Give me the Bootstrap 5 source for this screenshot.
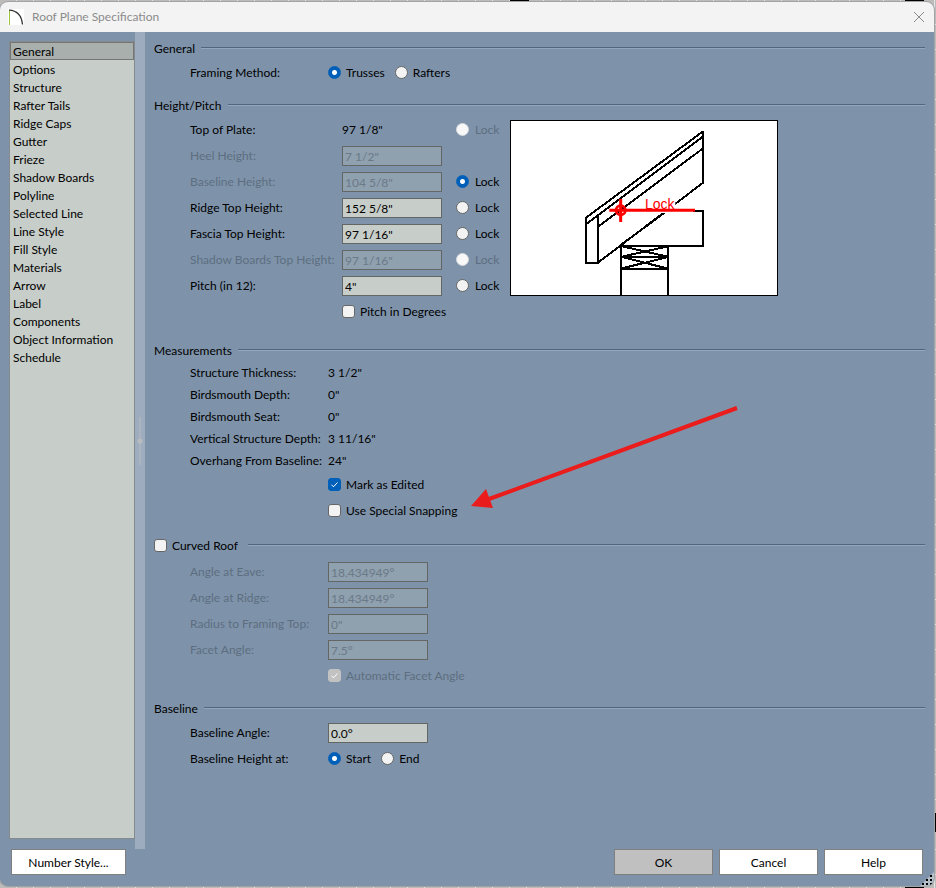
<!DOCTYPE html>
<html lang="en">
<head>
<meta charset="utf-8">
<meta name="viewport" content="width=device-width, initial-scale=1">
<title>Roof Plane Specification</title>
<link href="https://cdn.jsdelivr.net/npm/bootstrap@5.3.0/dist/css/bootstrap.min.css" rel="stylesheet">
<style>
  body {
    font-family: Lato, "Open Sans", sans-serif;
    font-size: 12px; line-height: 18px; color: #000;
    padding: 2px 2px 2px 0;
    background:
      linear-gradient(#000, #000) 510px 0 / 19px 2px no-repeat,
      linear-gradient(#000, #000) 905px 0 / 19px 2px no-repeat,
      linear-gradient(#000, #000) 905px 100% / 19px 2px no-repeat,
      linear-gradient(#000, #000) 100% 813px / 2px 19px no-repeat,
      repeating-linear-gradient(90deg, transparent 0 16px, #e4e4e4 16px 17px),
      repeating-linear-gradient(transparent 0 24px, #e4e4e4 24px 25px),
      #bdbbb9;
  }
  .dialog-window { background: #7e93aa; border-radius: 8px; overflow: hidden; box-shadow: 0 0 0 1px #a3a3a3; }
  .title-bar { height: 30px; background: #f3f3f3; color: #8b8b8b; padding: 0 9px 0 8px; }
  .title-bar .close-x { width: 12px; height: 12px; }
  .side-area { padding: 9px 0 10px 9px; }
  .side-list { width: 126px; background: #c7cdc8; border: 1px solid #858a8d; }
  .side-list a { color: #000; text-decoration: none; padding: 0 3px; height: 18px; line-height: 20px; }
  .side-list a.active { background: #a9afac; border: 1px solid #737674; padding: 0 2px; line-height: 18px; }
  .splitter { width: 10px; background: #9dadbf; }
  .panel { padding: 6px 9px 0 9px; }
  .group { margin-bottom: 9px; }
  .group-mid { margin-bottom: 11px; }
  .group-wide { margin-bottom: 15px; }
  .group-head { height: 22px; gap: 6px; line-height: 20px; }
  .group-head-check { gap: 10px; margin-bottom: 2px; }
  .rule { height: 2px; margin-bottom: 3px; background: linear-gradient(#53667d 50%, #93a7bd 50%); }
  .rows { padding-left: 36px; line-height: 20px; }
  .line { height: 26px; }
  .line-tight { height: 22px; }
  .label-a { width: 138px; white-space: nowrap; }
  .label-b { width: 152px; white-space: nowrap; }
  .value { width: 100px; }
  .indent-a { padding-left: 138px; }
  .indent-b { padding-left: 152px; }
  .off { color: #5d6e80; }
  .field {
    width: 100px; height: 20px; padding: 1px 2px 0; color: #000;
    background: #c7cdc8; border: 1px solid #646664; border-radius: 0;
  }
  .field:disabled { background: #8fa0af; color: #6b7a87; opacity: 1; }
  .tick, .dot {
    appearance: none; width: 13px; height: 13px; margin: 0 0 2px; flex: none;
    background: #f3f3f3; border: 1px solid #666; border-radius: 3px;
  }
  .dot { border-radius: 50%; }
  .dot:disabled { border-color: #d5d9dd; background: #f8f8f8; }
  .dot:checked { border-color: #005fb8; background: radial-gradient(circle, #fff 2px, #005fb8 3px); }
  .tick:checked { border-color: #005fb8; background: #005fb8; }
  .tick:checked:disabled { border-color: #c2c2c2; background: #c2c2c2; }
  .tick-box { width: 13px; height: 18px; }
  .tick-box .tick { margin: 2px 0 0; }
  .tick-box svg { left: 0; top: 2px; pointer-events: none; }
  .opt { gap: 5px; }
  .opt-b { gap: 6px; }
  .opts { gap: 10px; }
  .lock { margin-left: 14px; width: 54px; }
  .diagram { margin-top: 3px; border: 1px solid #000; background: #fff; line-height: 0; }
  .arrow { left: 317px; top: 66px; pointer-events: none; }
  .foot { padding: 0 11px 11px; gap: 6px; }
  .push {
    width: 99px; height: 26px; padding: 1px 0 0; font-size: 12px; line-height: 23px;
    background: #fff; color: #000; border: 1px solid #7f7f7f; border-radius: 0;
  }
  .push-wide { width: 115px; }
  .push-default { background: #c0c0c0; }
  .grip { right: 0; bottom: 0; }
</style>
<script src="https://cdn.jsdelivr.net/npm/bootstrap@5.3.0/dist/js/bootstrap.bundle.min.js"></script>
</head>
<body class="d-flex flex-column min-vh-100">
<div class="dialog-window d-flex flex-column flex-grow-1 position-relative">
  <header class="title-bar d-flex align-items-center">
    <svg width="16" height="16" viewBox="0 0 16 16" aria-hidden="true"><path fill="#fff" d="M0 0h16v16H0z"/><path d="M1.500 1v15" stroke="#9bc53d" fill="none"/><path d="M1 1.200C8 1.500 13.500 6 14.500 15.500" stroke="#333" stroke-width="1.300" fill="none"/></svg>
    <span class="ms-1 ps-1">Roof Plane Specification</span>
    <button type="button" class="btn p-0 border-0 ms-auto d-flex" aria-label="Close">
      <svg class="close-x" viewBox="0 0 12 12" aria-hidden="true"><path d="M1 1l10 10M11 1L1 11" stroke="#8b8b8b" fill="none"/></svg>
    </button>
  </header>

  <div class="d-flex flex-grow-1">
    <div class="side-area d-flex">
      <nav class="side-list d-flex flex-column" aria-label="Panels">
        <a href="#" class="active">General</a><a href="#">Options</a><a href="#">Structure</a><a href="#">Rafter Tails</a><a href="#">Ridge Caps</a><a href="#">Gutter</a><a href="#">Frieze</a><a href="#">Shadow Boards</a><a href="#">Polyline</a><a href="#">Selected Line</a><a href="#">Line Style</a><a href="#">Fill Style</a><a href="#">Materials</a><a href="#">Arrow</a><a href="#">Label</a><a href="#">Components</a><a href="#">Object Information</a><a href="#">Schedule</a>
      </nav>
    </div>
    <div class="splitter d-flex align-items-center justify-content-center">
      <svg width="6" height="48" viewBox="0 0 6 48" aria-hidden="true"><path d="M3 0v48" stroke="#b9bcbe"/><circle cx="3" cy="24" r="2.500" fill="#b9bcbe"/></svg>
    </div>

    <main class="panel flex-grow-1">
      <section class="group">
        <div class="group-head d-flex align-items-center"><span>General</span><div class="rule flex-grow-1"></div></div>
        <div class="rows">
          <div class="line d-flex align-items-center">
            <span class="label-a">Framing Method:</span>
            <div class="opts d-flex">
              <label class="opt d-flex align-items-center"><input type="radio" name="framing" class="dot" checked>Trusses</label>
              <label class="opt d-flex align-items-center"><input type="radio" name="framing" class="dot">Rafters</label>
            </div>
          </div>
        </div>
      </section>

      <section class="group-wide">
        <div class="group-head d-flex align-items-center"><span>Height/Pitch</span><div class="rule flex-grow-1"></div></div>
        <div class="d-flex align-items-start">
          <div class="rows">
            <div class="line d-flex align-items-center"><span class="label-b">Top of Plate:</span><span class="value">97 1/8"</span><label class="lock opt-b off d-flex align-items-center"><input type="radio" name="lock" class="dot" disabled>Lock</label></div>
            <div class="line d-flex align-items-center"><label class="label-b off" for="heel">Heel Height:</label><input id="heel" class="field" value='7 1/2"' disabled></div>
            <div class="line d-flex align-items-center"><label class="label-b off" for="base">Baseline Height:</label><input id="base" class="field" value='104 5/8"' disabled><label class="lock opt-b d-flex align-items-center"><input type="radio" name="lock" class="dot" checked>Lock</label></div>
            <div class="line d-flex align-items-center"><label class="label-b" for="ridge">Ridge Top Height:</label><input id="ridge" class="field" value='152 5/8"'><label class="lock opt-b d-flex align-items-center"><input type="radio" name="lock" class="dot">Lock</label></div>
            <div class="line d-flex align-items-center"><label class="label-b" for="fascia">Fascia Top Height:</label><input id="fascia" class="field" value='97 1/16"'><label class="lock opt-b d-flex align-items-center"><input type="radio" name="lock" class="dot">Lock</label></div>
            <div class="line d-flex align-items-center"><label class="label-b off" for="shadowb">Shadow Boards Top Height:</label><input id="shadowb" class="field" value='97 1/16"' disabled><label class="lock opt-b off d-flex align-items-center"><input type="radio" name="lock" class="dot" disabled>Lock</label></div>
            <div class="line d-flex align-items-center"><label class="label-b" for="pitch">Pitch (in 12):</label><input id="pitch" class="field" value='4"'><label class="lock opt-b d-flex align-items-center"><input type="radio" name="lock" class="dot">Lock</label></div>
            <div class="line indent-b d-flex align-items-center"><label class="opt d-flex align-items-center"><input type="checkbox" class="tick">Pitch in Degrees</label></div>
          </div>
          <div class="diagram">
            <svg width="266" height="174" viewBox="33 33 798 522" role="img" aria-label="Roof section with locked baseline">
              <g fill="none" stroke="#000" stroke-width="6" shape-rendering="crispEdges">
                <path d="M258 323L608 65M260 341L608 80M296 349L608 116M294 458L608 219M609 63V221"/>
                <path d="M258 321V459H294V318"/>
                <path d="M362 405L494 308"/>
                <path d="M580 302H609V408H362M363 408V558M504 408V558"/>
                <path d="M363 440H504M363 477H504M366 409L504 440M366 440L504 409M366 441L504 476M366 475L504 441"/>
              </g>
              <path fill="#fff" d="M440 266H526V309H440z"/>
              <g fill="none" stroke="#f00" stroke-width="9">
                <path d="M328 301H585M362 267V336"/><circle cx="362" cy="301" r="14" stroke-width="8"/>
              </g>
              <text x="435" y="297" fill="#f00" font-family="Liberation Sans, sans-serif" font-size="42">Lock</text>
            </svg>
          </div>
        </div>
      </section>

      <section class="group-mid position-relative">
        <div class="group-head d-flex align-items-center"><span>Measurements</span><div class="rule flex-grow-1"></div></div>
        <div class="rows">
          <div class="line-tight d-flex align-items-center"><span class="label-a">Structure Thickness:</span><span>3 1/2"</span></div>
          <div class="line-tight d-flex align-items-center"><span class="label-a">Birdsmouth Depth:</span><span>0"</span></div>
          <div class="line-tight d-flex align-items-center"><span class="label-a">Birdsmouth Seat:</span><span>0"</span></div>
          <div class="line-tight d-flex align-items-center"><span class="label-a">Vertical Structure Depth:</span><span>3 11/16"</span></div>
          <div class="line-tight d-flex align-items-center"><span class="label-a">Overhang From Baseline:</span><span>24"</span></div>
          <div class="line indent-a d-flex align-items-center"><label class="opt d-flex align-items-center"><span class="tick-box d-flex align-items-start position-relative"><input type="checkbox" class="tick" checked><svg class="position-absolute" width="13" height="13" viewBox="0 0 13 13" aria-hidden="true"><path d="M3.500 6.800l2 2 4-4.300" fill="none" stroke="#fff"/></svg></span>Mark as Edited</label></div>
          <div class="line indent-a d-flex align-items-center"><label class="opt d-flex align-items-center"><input type="checkbox" class="tick">Use Special Snapping</label></div>
        </div>
        <svg class="arrow position-absolute" width="268" height="106" viewBox="0 0 268 106" aria-hidden="true"><path d="M18 93L266 2" stroke="#ea1c1c" stroke-width="4" fill="none"/><path d="M0 100L15 83L22 102z" fill="#ea1c1c"/></svg>
      </section>

      <section class="group">
        <div class="group-head group-head-check d-flex align-items-center"><label class="opt d-flex align-items-center"><input type="checkbox" class="tick">Curved Roof</label><div class="rule flex-grow-1"></div></div>
        <div class="rows off">
          <div class="line d-flex align-items-center"><label class="label-a" for="eave">Angle at Eave:</label><input id="eave" class="field" value="18.434949°" disabled></div>
          <div class="line d-flex align-items-center"><label class="label-a" for="atridge">Angle at Ridge:</label><input id="atridge" class="field" value="18.434949°" disabled></div>
          <div class="line d-flex align-items-center"><label class="label-a" for="radius">Radius to Framing Top:</label><input id="radius" class="field" value='0"' disabled></div>
          <div class="line d-flex align-items-center"><label class="label-a" for="facet">Facet Angle:</label><input id="facet" class="field" value="7.5°" disabled></div>
          <div class="line indent-a d-flex align-items-center"><label class="opt d-flex align-items-center"><span class="tick-box d-flex align-items-start position-relative"><input type="checkbox" class="tick" checked disabled><svg class="position-absolute" width="13" height="13" viewBox="0 0 13 13" aria-hidden="true"><path d="M3.500 6.800l2 2 4-4.300" fill="none" stroke="#fff"/></svg></span>Automatic Facet Angle</label></div>
        </div>
      </section>

      <section>
        <div class="group-head d-flex align-items-center"><span>Baseline</span><div class="rule flex-grow-1"></div></div>
        <div class="rows">
          <div class="line d-flex align-items-center"><label class="label-a" for="bangle">Baseline Angle:</label><input id="bangle" class="field" value="0.0°"></div>
          <div class="line d-flex align-items-center"><span class="label-a">Baseline Height at:</span>
            <div class="opts d-flex">
              <label class="opt d-flex align-items-center"><input type="radio" name="bat" class="dot" checked>Start</label>
              <label class="opt d-flex align-items-center"><input type="radio" name="bat" class="dot">End</label>
            </div>
          </div>
        </div>
      </section>
    </main>
  </div>

  <footer class="foot d-flex">
    <button type="button" class="btn push push-wide me-auto">Number Style...</button>
    <button type="button" class="btn push push-default">OK</button>
    <button type="button" class="btn push">Cancel</button>
    <button type="button" class="btn push">Help</button>
  </footer>
  <svg class="grip position-absolute" width="14" height="14" viewBox="0 0 14 14" aria-hidden="true"><path d="M14 0v14H0z" fill="#b4bfca"/><path d="M10 3h2v2h-2zM10 7h2v2h-2zM10 11h2v2h-2zM6 7h2v2H6zM6 11h2v2H6zM2 11h2v2H2z" fill="#000"/></svg>
</div>
</body>
</html>
